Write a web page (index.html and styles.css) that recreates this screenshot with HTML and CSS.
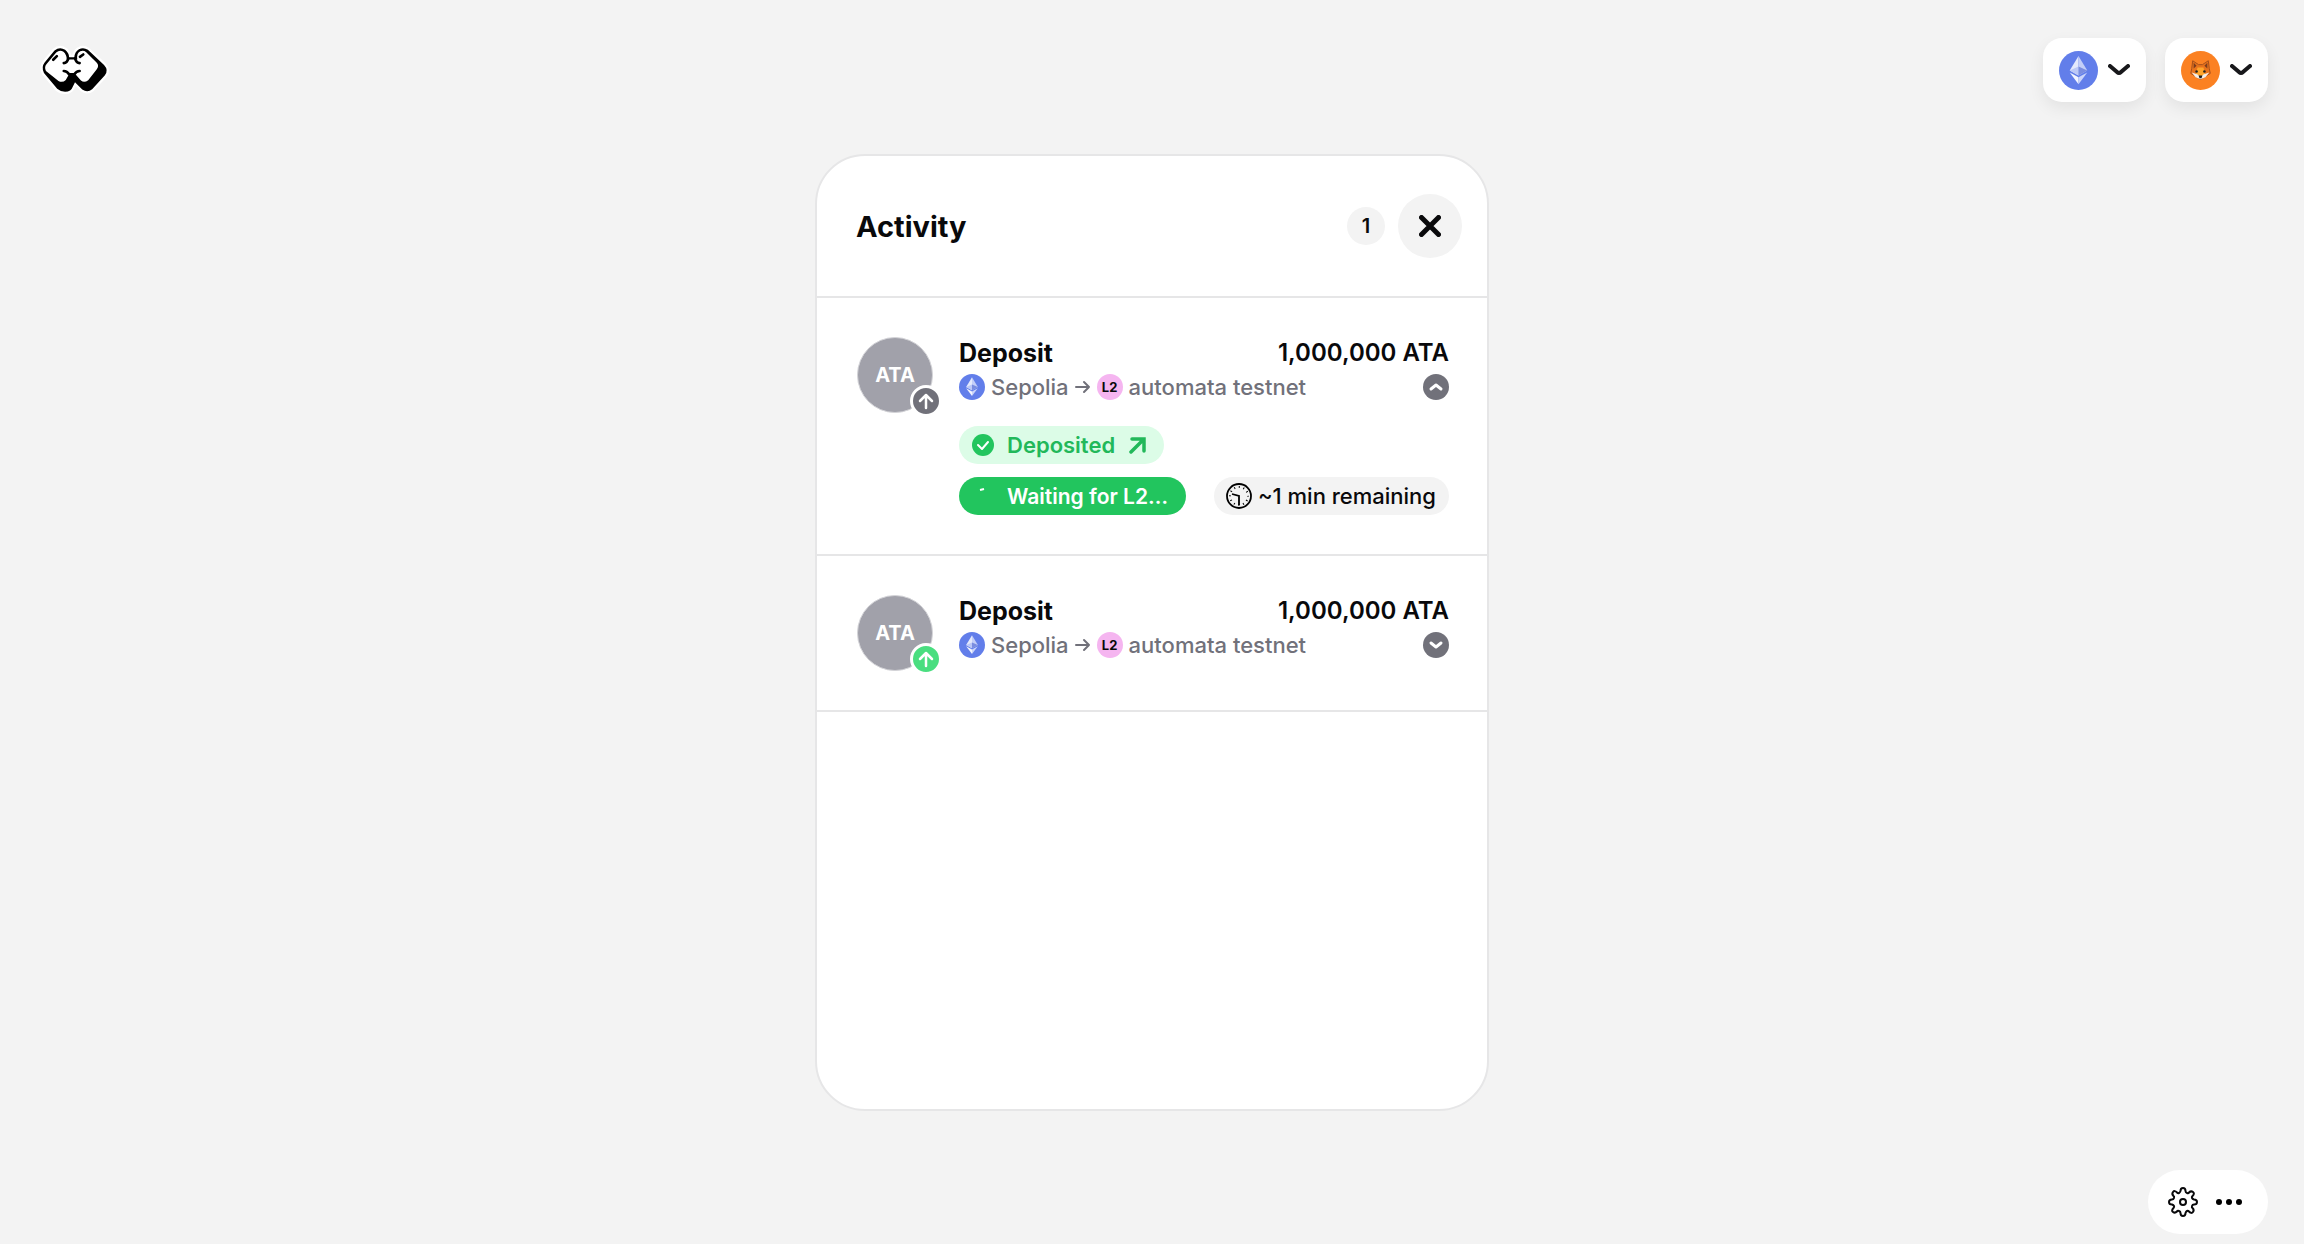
FILE: index.html
```html
<!DOCTYPE html>
<html lang="en">
<head>
    <meta charset="UTF-8">
    <meta name="viewport" content="width=device-width, initial-scale=1.0">
    <title>Activity</title>
    <link rel="stylesheet" href="styles.css">
</head>
<body>
    <!-- shared icons -->
    <svg class="sprite" aria-hidden="true">
        <symbol id="eth" viewBox="0 0 40 40">
            <circle cx="20" cy="20" r="20" fill="#627eea"/>
            <path fill="#e4e9fc" d="M20 5l-9 15 9 5z"/>
            <path fill="#c3cef8" d="M20 5l9 15-9 5z"/>
            <path fill="#bcc8f7" d="M20 16l-9 4 9 5z"/>
            <path fill="#7a8de0" d="M20 16l9 4-9 5z"/>
            <path fill="#f3f5fe" d="M20 27l-9-5 9 12z"/>
            <path fill="#cbd5fa" d="M20 27l9-5-9 12z"/>
        </symbol>
        <symbol id="chevron" viewBox="0 0 22 12">
            <path d="M2 2l7 6q2 2 4 0l7-6" fill="none" stroke="#18181b" stroke-width="4" stroke-linecap="round"/>
        </symbol>
        <symbol id="arrow-up" viewBox="0 0 26 26">
            <path d="M13 20V7M7 13l6-6 6 6" fill="none" stroke="#fff" stroke-width="2.5" stroke-linecap="round" stroke-linejoin="round"/>
        </symbol>
        <symbol id="arrow-right" viewBox="0 0 16 14">
            <path d="M1 7h13M9 2l5 5-5 5" fill="none" stroke="#71717a" stroke-width="2" stroke-linecap="round" stroke-linejoin="round"/>
        </symbol>
    </svg>

    <header class="topbar">
        <a href="#" class="logo" aria-label="Home">
            <svg viewBox="0 0 200 138">
                <path d="M38 10Q54-3 70 8Q82 18 82 30L98 30Q99 14 112 6Q126-1 139 8L188 54Q203 70 190 86L152 127Q138 139 122 128L100 106L94 118Q88 135 70 135Q56 135 46 126L6 78Q-3 60 8 46Z" stroke="#fff" stroke-width="14" stroke-linejoin="round"/>
                <path d="M38 10Q54-3 70 8Q82 18 82 30L98 30Q99 14 112 6Q126-1 139 8L188 54Q203 70 190 86L152 127Q138 139 122 128L100 106L94 118Q88 135 70 135Q56 135 46 126L6 78Q-3 60 8 46Z"/>
                <path fill="#fff" d="M43 16Q54 6 65 14Q75 23 75 37L107 37Q104 18 116 12Q126 8 134 15L166 47Q174 56 166 67L140 100Q128 109 118 101L98 78L84 78L72 99Q62 109 50 102L12 72Q6 60 14 51Z"/>
                <path d="M66 48Q76 48 80 34M114 48Q104 48 100 34M66 72Q76 72 82 82M114 72Q104 72 98 82M34 38l11-11M115 29l10-7" fill="none" stroke="#000" stroke-width="8" stroke-linecap="round"/>
            </svg>
        </a>
        <nav class="top-actions">
            <button class="menu-button" aria-label="Network">
                <svg class="icon-lg"><use href="#eth"/></svg>
                <svg class="chevron"><use href="#chevron"/></svg>
            </button>
            <button class="menu-button" aria-label="Wallet">
                <svg class="icon-lg" viewBox="0 0 40 40">
                    <circle cx="20" cy="20" r="20" fill="#fb8122"/>
                    <path d="M12 10l6 4h4l6-4 1 8 1 5-5 3-5 3-5-3-5-3 1-5z" fill="#e8731c" stroke="#a34f1c" stroke-width="1" stroke-linejoin="round"/>
                    <path d="M13 12l3 3-3 3zM27 12l-3 3 3 3z" fill="#7c3d1d"/>
                    <path d="M17 17h6l2 7-5 3-5-3z" fill="#ffa62b"/>
                    <path d="M11 22l6 2 3 3 3-3 6-2-4 5-5 2-5-2z" fill="#f4eee8"/>
                    <circle cx="16" cy="21" r="1.3" fill="#222"/>
                    <circle cx="24" cy="21" r="1.3" fill="#222"/>
                    <path d="M18 25h4l-1 3h-2z" fill="#1c1c1c"/>
                </svg>
                <svg class="chevron"><use href="#chevron"/></svg>
            </button>
        </nav>
    </header>

    <main>
        <section class="card">
            <div class="card-header">
                <h1>Activity</h1>
                <span class="count">1</span>
                <button class="close" aria-label="Close">
                    <svg viewBox="0 0 22 22"><path d="M2.5 2.5l17 17M19.5 2.5l-17 17" stroke="#09090b" stroke-width="5" stroke-linecap="round"/></svg>
                </button>
            </div>

            <article class="item">
                <div class="token">ATA
                    <span class="token-badge"><svg><use href="#arrow-up"/></svg></span>
                </div>
                <div class="item-body">
                    <div class="line title">
                        <h2>Deposit</h2>
                        <span>1,000,000 ATA</span>
                    </div>
                    <div class="line route">
                        <svg class="icon-sm"><use href="#eth"/></svg>
                        <span>Sepolia</span>
                        <svg class="arrow"><use href="#arrow-right"/></svg>
                        <span class="l2">L2</span>
                        <span>automata testnet</span>
                        <button class="toggle" aria-label="Collapse">
                            <svg viewBox="0 0 26 26"><path d="M8 15l5-4 5 4" fill="none" stroke="#fff" stroke-width="3" stroke-linecap="round" stroke-linejoin="round"/></svg>
                        </button>
                    </div>
                    <div class="steps">
                        <a href="#" class="pill deposited">
                            <svg class="state" viewBox="0 0 22 22">
                                <circle cx="11" cy="11" r="11" fill="#22c55e"/>
                                <path d="M6 11l4 4 6-7" fill="none" stroke="#fff" stroke-width="2" stroke-linecap="round" stroke-linejoin="round"/>
                            </svg>
                            Deposited
                            <svg class="external" viewBox="0 0 18 18"><path d="M3 16L15 4M4 3h12v12" fill="none" stroke="#22b85a" stroke-width="3.500" stroke-linecap="round"/></svg>
                        </a>
                        <div class="line">
                            <span class="pill waiting">
                                <svg class="state" viewBox="0 0 22 22"><path d="M8 5l4-1" stroke="#fff" stroke-width="2"/></svg>
                                Waiting for L2…
                            </span>
                            <span class="pill remaining">
                                <svg class="clock" viewBox="0 0 26 26" fill="none" stroke="#000">
                                    <circle cx="13" cy="13" r="12" stroke-width="1.800"/>
                                    <circle cx="13" cy="13" r="9" stroke-width="2" stroke-dasharray="1 3.712" stroke-dashoffset="0.5"/>
                                    <path d="M13 22v-9l-7-2" stroke-width="1.800"/>
                                </svg>
                                ~1 min remaining
                            </span>
                        </div>
                    </div>
                </div>
            </article>

            <article class="item">
                <div class="token">ATA
                    <span class="token-badge done"><svg><use href="#arrow-up"/></svg></span>
                </div>
                <div class="item-body">
                    <div class="line title">
                        <h2>Deposit</h2>
                        <span>1,000,000 ATA</span>
                    </div>
                    <div class="line route">
                        <svg class="icon-sm"><use href="#eth"/></svg>
                        <span>Sepolia</span>
                        <svg class="arrow"><use href="#arrow-right"/></svg>
                        <span class="l2">L2</span>
                        <span>automata testnet</span>
                        <button class="toggle" aria-label="Expand">
                            <svg viewBox="0 0 26 26"><path d="M8 11l5 4 5-4" fill="none" stroke="#fff" stroke-width="3" stroke-linecap="round" stroke-linejoin="round"/></svg>
                        </button>
                    </div>
                </div>
            </article>
        </section>
    </main>

    <footer>
        <div class="tools">
            <button aria-label="Settings">
                <svg class="gear" viewBox="0 0 30 30" fill="none" stroke="#09090b" stroke-width="2" stroke-linejoin="round">
                    <path d="M12.5 4Q12.500 1 15 1T17.500 4Q17.500 5.500 19 6T21 5.500Q23 3.500 25 5T24.500 9Q23.500 10 24 11T26 12.500Q29 12.500 29 15T26 17.500Q24.500 17.500 24 19T24.500 21Q26.500 23 25 25T21 24.500Q20 23.500 19 24T17.500 26Q17.500 29 15 29T12.500 26Q12.500 24.500 11 24T9 24.500Q7 26.500 5 25T5.500 21Q6.500 20 6 19T4 17.500Q1 17.500 1 15T4 12.500Q5.500 12.500 6 11T5.500 9Q3.500 7 5 5T9 5.500Q10 6.500 11 6T12.500 4Z"/>
                    <circle cx="15" cy="15" r="3"/>
                </svg>
            </button>
            <button aria-label="More">
                <svg class="dots" viewBox="0 0 26 6"><circle cx="3" cy="3" r="3"/><circle cx="13" cy="3" r="3"/><circle cx="23" cy="3" r="3"/></svg>
            </button>
        </div>
    </footer>
</body>
</html>
```
FILE: styles.css
```css
* {
    box-sizing: border-box;
}
body {
    margin: 0;
    min-height: 100vh;
    display: flex;
    flex-direction: column;
    background: #f3f3f3;
    color: #09090b;
    font-family: Inter, "Liberation Sans", sans-serif;
}
h1, h2 {
    margin: 0;
}
svg {
    display: block;
    flex-shrink: 0;
}
button {
    border: none;
    background: none;
    padding: 0;
    cursor: pointer;
}
.sprite {
    position: absolute;
    width: 0;
    height: 0;
}

.topbar {
    display: flex;
    align-items: center;
    justify-content: space-between;
    padding: 38px 36px;
}
.logo {
    margin-left: 6px;
}
.logo svg {
    width: 66px;
    height: 46px;
    overflow: visible;
}
.top-actions {
    display: flex;
    gap: 19px;
}
.menu-button {
    display: flex;
    align-items: center;
    gap: 10px;
    height: 64px;
    padding: 0 16px;
    background: #fff;
    border-radius: 19px;
    box-shadow: 0 6px 16px rgba(0, 0, 0, 0.07);
}
.icon-lg {
    width: 39px;
    height: 39px;
}
.chevron {
    width: 22px;
    height: 12px;
}

main {
    flex: 1;
    display: flex;
    justify-content: center;
    padding: 14px 16px 59px;
}
.card {
    width: 100%;
    max-width: 674px;
    background: #fff;
    border: 2px solid #e6e6e7;
    border-radius: 50px;
    overflow: hidden;
}
.card-header {
    display: flex;
    align-items: center;
    height: 142px;
    padding: 0 25px 0 39px;
    border-bottom: 2px solid #e6e6e7;
}
h1 {
    flex: 1;
    font-size: 29px;
    font-weight: 700;
}
.count {
    width: 38px;
    margin-right: 13px;
    border-radius: 50%;
    background: #f3f3f3;
    font-size: 20px;
    font-weight: 600;
    line-height: 38px;
    text-align: center;
}
.close {
    display: grid;
    place-items: center;
    width: 64px;
    height: 64px;
    border-radius: 50%;
    background: #f3f3f3;
}
.close svg {
    width: 22px;
    height: 22px;
}

.item {
    display: flex;
    gap: 26px;
    padding: 39px 38px 39px 40px;
    border-bottom: 2px solid #e6e6e7;
}
.token {
    position: relative;
    width: 76px;
    height: 76px;
    border: 1px solid #d4d4d8;
    border-radius: 50%;
    background: #a1a1aa;
    color: #fff;
    font-size: 20px;
    font-weight: 700;
    line-height: 74px;
    text-align: center;
}
.token-badge {
    position: absolute;
    right: -10px;
    bottom: -5px;
    border: 3px solid #fff;
    border-radius: 50%;
    background: #71717a;
}
.token-badge.done {
    background: #4ade80;
}
.token-badge svg {
    width: 26px;
    height: 26px;
}
.item-body {
    flex: 1;
}
.line {
    display: flex;
    align-items: center;
    justify-content: space-between;
}
.title {
    height: 31px;
    font-size: 24px;
    font-weight: 600;
}
h2 {
    font-size: 25px;
    font-weight: 700;
}
.route {
    justify-content: flex-start;
    gap: 6px;
    height: 38px;
    color: #71717a;
    font-size: 22px;
    font-weight: 500;
}
.icon-sm {
    width: 26px;
    height: 26px;
}
.arrow {
    width: 16px;
    height: 14px;
}
.l2 {
    width: 26px;
    border-radius: 50%;
    background: #f5b5f0;
    color: #09090b;
    font-size: 13px;
    font-weight: 700;
    line-height: 26px;
    text-align: center;
}
.toggle {
    width: 26px;
    height: 26px;
    margin-left: auto;
    border-radius: 50%;
    background: #71717a;
}

.steps {
    display: flex;
    flex-direction: column;
    align-items: stretch;
    gap: 13px;
    margin-top: 20px;
}
.pill {
    display: flex;
    align-items: center;
    align-self: flex-start;
    gap: 13px;
    height: 38px;
    padding: 0 18px 0 13px;
    border-radius: 19px;
    font-size: 22px;
    font-weight: 600;
    text-decoration: none;
    white-space: nowrap;
}
.deposited {
    background: #dcfce7;
    color: #22b85a;
}
.waiting {
    background: #22c55e;
    color: #fff;
    font-size: 21px;
}
.remaining {
    gap: 6px;
    padding: 0 13px 0 12px;
    background: #f3f3f3;
    font-weight: 500;
}
.state {
    width: 22px;
    height: 22px;
}
.external {
    width: 18px;
    height: 18px;
}
.clock {
    width: 26px;
    height: 26px;
}

footer {
    display: flex;
    justify-content: flex-end;
    padding: 0 36px 10px;
}
.tools {
    display: flex;
    align-items: center;
    gap: 18px;
    height: 64px;
    padding: 0 26px 0 20px;
    border-radius: 32px;
    background: #fff;
}
.gear {
    width: 30px;
    height: 30px;
}
.dots {
    width: 26px;
    height: 6px;
}
```
